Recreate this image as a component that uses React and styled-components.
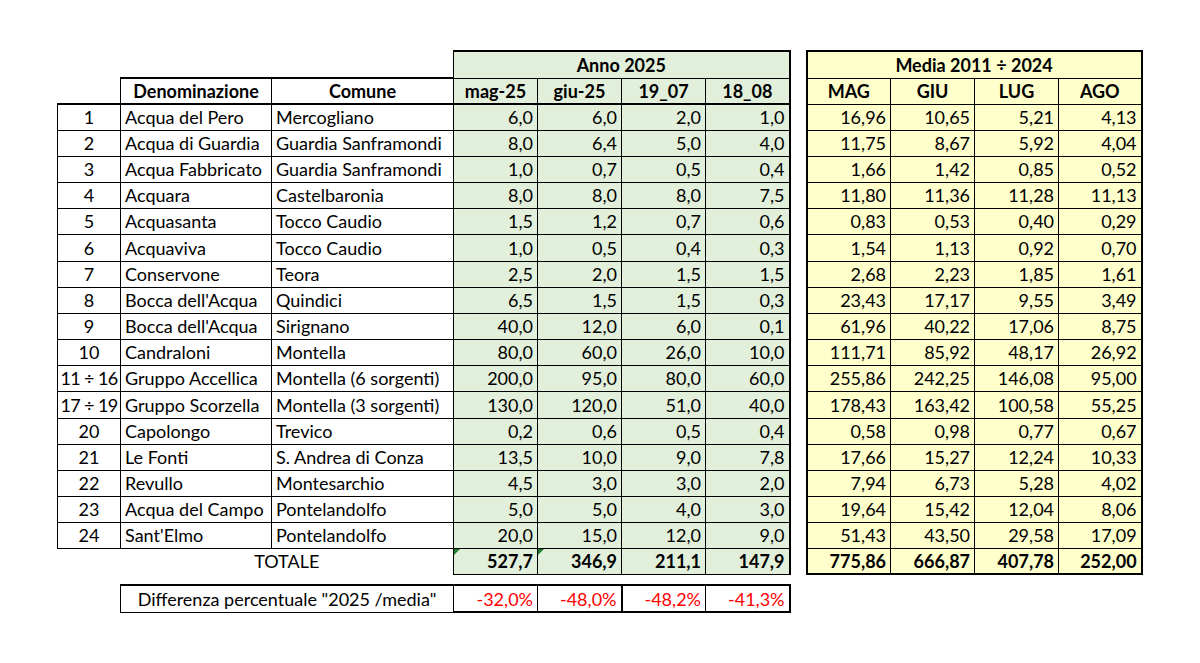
import styled, { createGlobalStyle } from "styled-components";

const GlobalStyle = createGlobalStyle`
  html, body {
    margin: 0;
    padding: 0;
    background: #ffffff;
  }
  body {
    font-family: "Lato", "Liberation Sans", sans-serif;
    color: #000000;
  }
`;

const Page = styled.div`
  padding: 50px 0 0 57px;
`;

const Sheet = styled.table`
  border-collapse: collapse;
  table-layout: fixed;
  width: 1084px;
  font-size: 18px;
`;

const Row = styled.tr`
  height: ${({ $h }) => $h || 26}px;
`;

const line = (w) => (w ? `${w}px solid #000` : "none");

const Cell = styled.td`
  position: relative;
  padding: ${({ $align }) => ($align === "center" ? "0" : "0 4px")};
  height: ${({ $h }) => $h || 26}px;
  box-sizing: border-box;
  white-space: nowrap;
  overflow: visible;
  text-align: ${({ $align }) => $align || "left"};
  font-weight: ${({ $bold }) => ($bold ? 700 : 400)};
  letter-spacing: ${({ $tight }) => ($tight ? "-0.6px" : "normal")};
  color: ${({ $red }) => ($red ? "#ff0000" : "#000000")};
  background: ${({ $bg }) =>
    $bg === "green" ? "#e2efda" : $bg === "yellow" ? "#ffffcc" : "transparent"};
  border-top: ${({ $t }) => line($t)};
  border-right: ${({ $r }) => line($r)};
  border-bottom: ${({ $b }) => line($b)};
  border-left: ${({ $l }) => line($l)};
  vertical-align: middle;
  line-height: 1;
`;

const Flag = styled.span`
  position: absolute;
  top: 0;
  left: 0;
  width: 0;
  height: 0;
  border-top: 6px solid #1e7d32;
  border-right: 6px solid transparent;
`;

const widths = [63, 151, 182, 84, 84, 84, 84, 17, 84, 84, 84, 83];

const rows = [
  ["1", "Acqua del Pero", "Mercogliano", "6,0", "6,0", "2,0", "1,0", "16,96", "10,65", "5,21", "4,13"],
  ["2", "Acqua di  Guardia", "Guardia Sanframondi", "8,0", "6,4", "5,0", "4,0", "11,75", "8,67", "5,92", "4,04"],
  ["3", "Acqua Fabbricato", "Guardia Sanframondi", "1,0", "0,7", "0,5", "0,4", "1,66", "1,42", "0,85", "0,52"],
  ["4", "Acquara", "Castelbaronia", "8,0", "8,0", "8,0", "7,5", "11,80", "11,36", "11,28", "11,13"],
  ["5", "Acquasanta", "Tocco Caudio", "1,5", "1,2", "0,7", "0,6", "0,83", "0,53", "0,40", "0,29"],
  ["6", "Acquaviva", "Tocco Caudio", "1,0", "0,5", "0,4", "0,3", "1,54", "1,13", "0,92", "0,70"],
  ["7", "Conservone", "Teora", "2,5", "2,0", "1,5", "1,5", "2,68", "2,23", "1,85", "1,61"],
  ["8", "Bocca dell'Acqua", "Quindici", "6,5", "1,5", "1,5", "0,3", "23,43", "17,17", "9,55", "3,49"],
  ["9", "Bocca dell'Acqua", "Sirignano", "40,0", "12,0", "6,0", "0,1", "61,96", "40,22", "17,06", "8,75"],
  ["10", "Candraloni", "Montella", "80,0", "60,0", "26,0", "10,0", "111,71", "85,92", "48,17", "26,92"],
  ["11 ÷ 16", "Gruppo Accellica", "Montella (6 sorgenti)", "200,0", "95,0", "80,0", "60,0", "255,86", "242,25", "146,08", "95,00"],
  ["17 ÷ 19", "Gruppo Scorzella", "Montella (3 sorgenti)", "130,0", "120,0", "51,0", "40,0", "178,43", "163,42", "100,58", "55,25"],
  ["20", "Capolongo", "Trevico", "0,2", "0,6", "0,5", "0,4", "0,58", "0,98", "0,77", "0,67"],
  ["21", "Le Fonti", "S. Andrea di Conza", "13,5", "10,0", "9,0", "7,8", "17,66", "15,27", "12,24", "10,33"],
  ["22", "Revullo", "Montesarchio", "4,5", "3,0", "3,0", "2,0", "7,94", "6,73", "5,28", "4,02"],
  ["23", "Acqua del Campo", "Pontelandolfo", "5,0", "5,0", "4,0", "3,0", "19,64", "15,42", "12,04", "8,06"],
  ["24", "Sant'Elmo", "Pontelandolfo", "20,0", "15,0", "12,0", "9,0", "51,43", "43,50", "29,58", "17,09"],
];

const totals2025 = ["527,7", "346,9", "211,1", "147,9"];
const totalsMedia = ["775,86", "666,87", "407,78", "252,00"];
const diffs = ["-32,0%", "-48,0%", "-48,2%", "-41,3%"];
const heads2025 = ["mag-25", "giu-25", "19_07", "18_08"];
const headsMedia = ["MAG", "GIU", "LUG", "AGO"];

export default function App() {
  return (
    <Page>
      <GlobalStyle />
      <Sheet>
        <colgroup>
          {widths.map((w, i) => (
            <col key={i} style={{ width: w }} />
          ))}
        </colgroup>
        <tbody>
          <Row $h={27}>
            <Cell colSpan={3} />
            <Cell colSpan={4} $bg="green" $align="center" $bold $t={2} $l={1} $r={2} $b={1}>
              Anno 2025
            </Cell>
            <Cell />
            <Cell colSpan={4} $bg="yellow" $align="center" $bold $t={2} $l={2} $r={2} $b={1}>
              Media 2011 ÷ 2024
            </Cell>
          </Row>
          <Row>
            <Cell $b={2} />
            <Cell $align="center" $bold $t={2} $l={1} $r={1} $b={2}>
              Denominazione
            </Cell>
            <Cell $align="center" $bold $t={2} $l={1} $r={1} $b={2}>
              Comune
            </Cell>
            {heads2025.map((h, i) => (
              <Cell key={h} $bg="green" $align="center" $bold $l={1} $r={i === 3 ? 2 : 1} $b={2}>
                {h}
              </Cell>
            ))}
            <Cell />
            {headsMedia.map((h, i) => (
              <Cell key={h} $bg="yellow" $align="center" $bold $l={i === 0 ? 2 : 1} $r={i === 3 ? 2 : 1} $b={1}>
                {h}
              </Cell>
            ))}
          </Row>
          {rows.map((r, n) => (
            <Row key={r[0]} $h={n % 6 === 5 ? 27 : 26}>
              <Cell $align="center" $tight={r[0].length > 3} $l={1} $r={1} $b={1}>
                {r[0]}
              </Cell>
              <Cell $l={1} $r={1} $b={1}>
                {r[1]}
              </Cell>
              <Cell $l={1} $r={1} $b={1}>
                {r[2]}
              </Cell>
              {r.slice(3, 7).map((v, i) => (
                <Cell key={`g${i}`} $bg="green" $align="right" $l={1} $r={i === 3 ? 2 : 1} $b={1}>
                  {v}
                </Cell>
              ))}
              <Cell />
              {r.slice(7).map((v, i) => (
                <Cell key={`y${i}`} $bg="yellow" $align="right" $l={i === 0 ? 2 : 1} $r={i === 3 ? 2 : 1} $b={1}>
                  {v}
                </Cell>
              ))}
            </Row>
          ))}
          <Row>
            <Cell />
            <Cell colSpan={2} $align="center">
              TOTALE
            </Cell>
            {totals2025.map((v, i) => (
              <Cell key={v} $bg="green" $align="right" $bold $l={1} $r={i === 3 ? 2 : 1} $b={1}>
                {i < 2 && <Flag />}
                {v}
              </Cell>
            ))}
            <Cell />
            {totalsMedia.map((v, i) => (
              <Cell key={v} $bg="yellow" $align="right" $bold $l={i === 0 ? 2 : 1} $r={i === 3 ? 2 : 1} $b={2}>
                {v}
              </Cell>
            ))}
          </Row>
          <Row $h={11}>
            <Cell colSpan={12} $h={11} />
          </Row>
          <Row $h={27}>
            <Cell />
            <Cell colSpan={2} $align="center" $t={2} $l={1} $r={1} $b={1}>
              Differenza percentuale "2025 /media"
            </Cell>
            {diffs.map((v, i) => (
              <Cell key={v} $align="right" $red $t={2} $l={1} $r={i === 1 || i === 3 ? 2 : 1} $b={2}>
                {v}
              </Cell>
            ))}
            <Cell colSpan={5} />
          </Row>
        </tbody>
      </Sheet>
    </Page>
  );
}
